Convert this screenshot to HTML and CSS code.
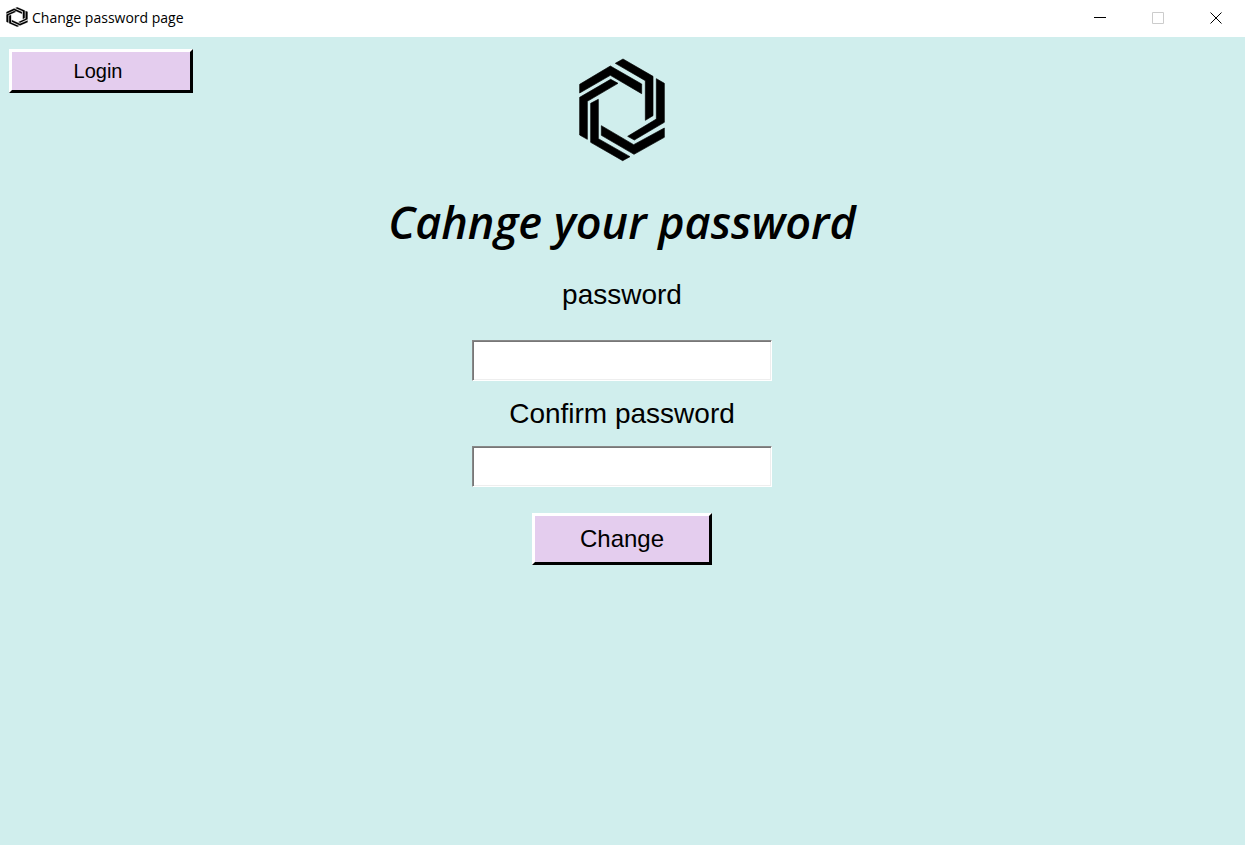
FILE: index.html
```html
<!DOCTYPE html>
<html lang="en">
<head>
<meta charset="utf-8">
<meta name="viewport" content="width=device-width, initial-scale=1">
<title>Change password page</title>
<link rel="stylesheet" href="styles.css">
</head>
<body>
<svg class="defs" aria-hidden="true">
  <symbol id="hex" viewBox="38 24 264 312" preserveAspectRatio="none">
    <path d="M43 103 135 48l94 54v29L135 76 43 129z"/>
    <path d="M150 40l23-13 90 52v118l-23 14V92z"/>
    <path d="M273 86l24 14v117l-90 53-20-11 86-52z"/>
    <path d="M297 234v28l-91 51-98-57v-29l97 57z"/>
    <path d="M76 160l23-12v118l95 54-22 12-96-55z"/>
    <path d="M136 88l22 12-92 54v114l-23-13V142z"/>
  </symbol>
</svg>
<header class="titlebar">
  <svg class="app-icon" aria-hidden="true"><use href="#hex"/></svg>
  <span class="caption">Change password page</span>
  <div class="controls">
    <button class="control" type="button" aria-label="Minimize">
      <svg viewBox="0 0 12 12"><path d="M0 5.5h12"/></svg>
    </button>
    <button class="control" type="button" aria-label="Maximize" disabled>
      <svg viewBox="0 0 12 12"><path d="M.5.5h11v11H.5z"/></svg>
    </button>
    <button class="control" type="button" aria-label="Close">
      <svg viewBox="0 0 12 12"><path d="M.5.5l11 11M11.5.5l-11 11"/></svg>
    </button>
  </div>
</header>
<main class="page">
  <button class="button login" type="button">Login</button>
  <form class="form">
    <svg class="logo" role="img" aria-label="Logo"><use href="#hex"/></svg>
    <h1 class="title">Cahnge your password</h1>
    <div class="field field-first">
      <label class="label" for="password">password</label>
      <input class="input" id="password" type="password">
    </div>
    <div class="field">
      <label class="label" for="confirm">Confirm password</label>
      <input class="input" id="confirm" type="password">
    </div>
    <button class="button change" type="button">Change</button>
  </form>
</main>
</body>
</html>
```

FILE: styles.css
```css
* {
  box-sizing: border-box;
}

body {
  margin: 0;
  min-height: 100vh;
  display: flex;
  flex-direction: column;
  background: #d0eeed;
  color: #000;
  font-family: "Liberation Sans", Arial, sans-serif;
}

.defs {
  display: none;
}

.titlebar {
  display: flex;
  align-items: center;
  height: 37px;
  padding-left: 6px;
  background: #fff;
}

.app-icon {
  width: 22px;
  height: 20px;
  margin: 0 4px 3px 0;
  stroke: #000;
  stroke-width: 2px;
}

.caption {
  padding-bottom: 2px;
  font: 14px/20px "Segoe UI", "Open Sans", sans-serif;
}

.controls {
  display: flex;
  align-self: stretch;
  margin-left: auto;
}

.control {
  display: grid;
  place-items: center;
  width: 58px;
  padding: 0 0 2px;
  border: 0;
  background: none;
  color: #000;
}

.control:disabled {
  color: #ccc;
}

.control svg {
  width: 12px;
  height: 12px;
  fill: none;
  stroke: currentColor;
}

.page {
  flex: 1;
  display: grid;
  grid-template-columns: 1fr auto 1fr;
  align-items: start;
  padding: 12px 10px 12px 9px;
}

.button {
  border: 3px solid;
  border-color: #fff #000 #000 #fff;
  border-radius: 0;
  background: #e4cdee;
  color: #000;
  font-family: inherit;
}

.login {
  width: 184px;
  height: 44px;
  padding: 0 6px 0 0;
  font-size: 20px;
}

.form {
  grid-column: 2;
  display: flex;
  flex-direction: column;
  align-items: center;
  padding-top: 9px;
}

.logo {
  width: 88px;
  height: 104px;
  stroke: #000;
  stroke-width: 2px;
}

.title {
  margin: 30px 0 0;
  font: italic 600 45px/60px "Segoe Print", "Open Sans", sans-serif;
}

.field {
  display: flex;
  flex-direction: column;
  align-items: center;
  gap: 16px;
  margin-top: 17px;
}

.field-first {
  gap: 29px;
  margin-top: 27px;
}

.label {
  font-size: 28px;
  line-height: 32px;
}

.input {
  width: 300px;
  height: 41px;
  padding: 0 6px;
  border: 1px solid;
  border-color: #888 #fff #fff #888;
  border-radius: 0;
  box-shadow: inset 1px 1px #777, inset -1px -1px #eee;
  background: #fff;
  font: 28px "Liberation Sans", Arial, sans-serif;
}

.change {
  width: 180px;
  height: 52px;
  margin-top: 26px;
  padding: 0;
  font-size: 24px;
}
```
